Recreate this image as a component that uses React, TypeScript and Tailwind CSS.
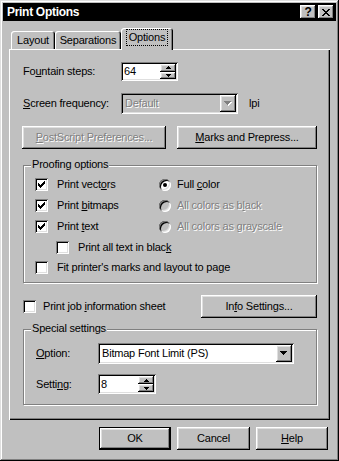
import React, { ReactNode } from "react";

// Win95-style 3D edges
const raised =
    "shadow-[inset_-1px_-1px_0_#000,inset_1px_1px_0_#fff,inset_-2px_-2px_0_#808080,inset_2px_2px_0_#dfdfdf]";
const sunken =
    "shadow-[inset_1px_1px_0_#808080,inset_-1px_-1px_0_#fff,inset_2px_2px_0_#000,inset_-2px_-2px_0_#dfdfdf]";
const dim = "text-[#808080] [text-shadow:1px_1px_0_#fff]";

function U({ children }: { children: ReactNode }) {
    return <u className="underline-offset-[1px]">{children}</u>;
}

function Button({
    children,
    className = "",
    disabled,
    isDefault,
}: {
    children: ReactNode;
    className?: string;
    disabled?: boolean;
    isDefault?: boolean;
}) {
    return (
        <div
            className={`h-[23px] flex items-center justify-center bg-[#c0c0c0] ${
                isDefault ? "border border-black" : ""
            } ${className}`}
        >
            <div className={`w-full h-full flex items-center justify-center ${raised}`}>
                <span className={disabled ? dim : ""}>{children}</span>
            </div>
        </div>
    );
}

function Checkbox({ checked }: { checked?: boolean }) {
    return (
        <span className={`w-[13px] h-[13px] shrink-0 bg-white flex items-center justify-center ${sunken}`}>
            {checked && (
                <svg width="7" height="7" viewBox="0 0 7 7" shapeRendering="crispEdges">
                    <path
                        d="M0 2h1v3H0z M1 3h1v3H1z M2 4h1v3H2z M3 3h1v3H3z M4 2h1v3H4z M5 1h1v3H5z M6 0h1v3H6z"
                        fill="#000"
                    />
                </svg>
            )}
        </span>
    );
}

function Radio({ checked, disabled }: { checked?: boolean; disabled?: boolean }) {
    return (
        <span
            className={`w-[12px] h-[12px] shrink-0 rounded-full flex items-center justify-center ${
                disabled ? "bg-[#c0c0c0]" : "bg-white"
            } ${sunken}`}
        >
            {checked && <span className="w-[4px] h-[4px] rounded-full bg-black" />}
        </span>
    );
}

function DownArrow({ disabled }: { disabled?: boolean }) {
    return (
        <svg width="8" height="5" viewBox="0 0 8 5" shapeRendering="crispEdges">
            {disabled && <path d="M1 1h7v1h-1v1h-1v1h-1v1h-1v-1h-1v-1h-1v-1h-1z" fill="#fff" />}
            <path
                d="M0 0h7v1h-1v1h-1v1h-1v1h-1v-1h-1v-1h-1v-1h-1z"
                fill={disabled ? "#808080" : "#000"}
            />
        </svg>
    );
}

function Combo({
    value,
    className = "",
    disabled,
}: {
    value: string;
    className?: string;
    disabled?: boolean;
}) {
    return (
        <div
            className={`h-[21px] flex items-center p-[2px] ${disabled ? "bg-[#c0c0c0]" : "bg-white"} ${sunken} ${className}`}
        >
            <span className={`flex-1 pl-[2px] ${disabled ? dim : ""}`}>{value}</span>
            <span className={`w-[16px] h-full flex items-center justify-center bg-[#c0c0c0] ${raised}`}>
                <DownArrow disabled={disabled} />
            </span>
        </div>
    );
}

function SpinBtn({ up }: { up?: boolean }) {
    return (
        <span className={`flex-1 flex items-center justify-center bg-[#c0c0c0] ${raised}`}>
            <svg width="5" height="3" viewBox="0 0 5 3" shapeRendering="crispEdges">
                {up ? (
                    <path d="M2 0h1v1h1v1h1v1H0V2h1V1h1z" fill="#000" />
                ) : (
                    <path d="M0 0h5v1H4v1H3v1H2V2H1V1H0z" fill="#000" />
                )}
            </svg>
        </span>
    );
}

function Spinner({ value, className = "" }: { value: string; className?: string }) {
    return (
        <div className={`h-[19px] flex items-center p-[2px] bg-white ${sunken} ${className}`}>
            <span className="flex-1 pl-[1px]">{value}</span>
            <span className="w-[16px] h-full flex flex-col">
                <SpinBtn up />
                <SpinBtn />
            </span>
        </div>
    );
}

function Group({
    title,
    className = "",
    children,
}: {
    title: ReactNode;
    className?: string;
    children: ReactNode;
}) {
    return (
        <div
            className={`relative border border-[#808080] shadow-[inset_1px_1px_0_#fff,1px_1px_0_#fff] ${className}`}
        >
            <span className="absolute -top-[8px] left-[7px] px-[1px] leading-[13px] bg-[#c0c0c0]">
                {title}
            </span>
            {children}
        </div>
    );
}

export default function App() {
    return (
        <div
            className={`w-[339px] h-[461px] p-[3px] flex flex-col bg-[#c0c0c0] text-black text-[11px] leading-[13px] tracking-[-0.2px] font-['Liberation_Sans',Arial,sans-serif] shadow-[inset_-1px_-1px_0_#000,inset_1px_1px_0_#dfdfdf,inset_-2px_-2px_0_#808080,inset_2px_2px_0_#fff]`}
        >
            {/* Title bar */}
            <div className="h-[18px] shrink-0 flex items-center bg-black pl-[4px] pr-[2px]">
                <span className="flex-1 text-white font-bold text-[12px] tracking-[-0.3px]">
                    Print Options
                </span>
                <span
                    className={`w-[16px] h-[14px] mr-[2px] flex items-center justify-center bg-[#c0c0c0] font-bold text-[12px] ${raised}`}
                >
                    ?
                </span>
                <span className={`w-[16px] h-[14px] flex items-center justify-center bg-[#c0c0c0] ${raised}`}>
                    <svg width="8" height="7" viewBox="0 0 8 7" shapeRendering="crispEdges">
                        <path
                            d="M0 0h2v1h1v1h2V1h1V0h2v1H7v1H6v1H5v1h1v1h1v1h1v1H6V6H5V5H3v1H2v1H0V6h1V5h1V4h1V3H2V2H1V1H0z"
                            fill="#000"
                        />
                    </svg>
                </span>
            </div>

            {/* Tabs */}
            <div className="mt-[7px] h-[21px] shrink-0 flex items-end pl-[8px]">
                <div className="w-[44px] h-[18px] pt-[1px] flex items-center justify-center rounded-t-[3px] shadow-[inset_1px_1px_0_#fff,inset_-1px_0_0_#000,inset_-2px_0_0_#808080]">
                    Layout
                </div>
                <div className="w-[66px] h-[18px] pt-[1px] flex items-center justify-center rounded-t-[3px] shadow-[inset_1px_1px_0_#fff,inset_-1px_0_0_#000,inset_-2px_0_0_#808080]">
                    Separations
                </div>
                <div className="relative z-10 w-[52px] h-[22px] -mb-[1px] pb-[3px] flex items-center justify-center bg-[#c0c0c0] rounded-t-[3px] shadow-[inset_1px_1px_0_#fff,inset_-1px_0_0_#000,inset_-2px_0_0_#808080]">
                    <span className="px-[2px] py-[1px] outline outline-1 outline-dotted outline-black">Options</span>
                </div>
            </div>

            {/* Tab panel */}
            <div className="ml-[6px] w-[321px] h-[371px] shrink-0 pl-[14px] pt-[13px] flex flex-col shadow-[inset_1px_1px_0_#fff,inset_-1px_-1px_0_#000,inset_-2px_-2px_0_#808080]">
                <div className="h-[19px] flex items-center">
                    <span className="w-[98px]">
                        Fo<U>u</U>ntain steps:
                    </span>
                    <Spinner value="64" className="w-[57px]" />
                </div>

                <div className="mt-[12px] h-[20px] flex items-center">
                    <span className="w-[98px]">
                        <U>S</U>creen frequency:
                    </span>
                    <Combo value="Default" disabled className="w-[117px]" />
                    <span className="ml-[11px]">lpi</span>
                </div>

                <div className="mt-[13px] -ml-[1px] flex gap-[11px]">
                    <Button disabled className="w-[144px]">
                        <U>P</U>ostScript Preferences...
                    </Button>
                    <Button className="w-[140px]">
                        <U>M</U>arks and Prepress...
                    </Button>
                </div>

                <Group title="Proofing options" className="mt-[16px] w-[294px] h-[118px] pt-[8px] pl-[11px]">
                    <div className="h-[21px] flex items-center">
                        <span className="w-[124px] flex items-center gap-[9px]">
                            <Checkbox checked />
                            <span>
                                Print vect<U>o</U>rs
                            </span>
                        </span>
                        <span className="flex items-center gap-[6px]">
                            <Radio checked />
                            <span>
                                Full <U>c</U>olor
                            </span>
                        </span>
                    </div>
                    <div className="h-[21px] flex items-center">
                        <span className="w-[124px] flex items-center gap-[9px]">
                            <Checkbox checked />
                            <span>
                                Print <U>b</U>itmaps
                            </span>
                        </span>
                        <span className="flex items-center gap-[6px]">
                            <Radio disabled />
                            <span className={dim}>
                                All colors as b<U>l</U>ack
                            </span>
                        </span>
                    </div>
                    <div className="h-[21px] flex items-center">
                        <span className="w-[124px] flex items-center gap-[9px]">
                            <Checkbox checked />
                            <span>
                                Print <U>t</U>ext
                            </span>
                        </span>
                        <span className="flex items-center gap-[6px]">
                            <Radio disabled />
                            <span className={dim}>
                                All colors as <U>g</U>rayscale
                            </span>
                        </span>
                    </div>
                    <div className="h-[20px] pl-[21px] flex items-center gap-[9px]">
                        <Checkbox />
                        <span>
                            Print all text in blac<U>k</U>
                        </span>
                    </div>
                    <div className="h-[21px] flex items-center gap-[9px]">
                        <Checkbox />
                        <span>
                            Fit printer's marks and layout to pa<U>g</U>e
                        </span>
                    </div>
                </Group>

                <div className="mt-[12px] w-[294px] h-[23px] flex items-center justify-between">
                    <span className="flex items-center gap-[7px]">
                        <Checkbox />
                        <span>
                            Print job <U>i</U>nformation sheet
                        </span>
                    </span>
                    <Button className="w-[116px]">
                        In<U>f</U>o Settings...
                    </Button>
                </div>

                <Group title="Special settings" className="mt-[11px] w-[294px] h-[76px] pt-[13px] pl-[12px]">
                    <div className="h-[21px] flex items-center">
                        <span className="w-[62px]">
                            <U>O</U>ption:
                        </span>
                        <Combo value="Bitmap Font Limit (PS)" className="w-[196px]" />
                    </div>
                    <div className="mt-[10px] h-[20px] flex items-center">
                        <span className="w-[62px]">
                            Setti<U>n</U>g:
                        </span>
                        <Spinner value="8" className="w-[58px] h-[20px]" />
                    </div>
                </Group>
            </div>

            {/* Dialog buttons */}
            <div className="mt-[7px] pr-[8px] flex justify-end gap-[6px]">
                <Button isDefault className="w-[72px]">
                    OK
                </Button>
                <Button className="w-[73px]">Cancel</Button>
                <Button className="w-[72px]">
                    <U>H</U>elp
                </Button>
            </div>
        </div>
    );
}
